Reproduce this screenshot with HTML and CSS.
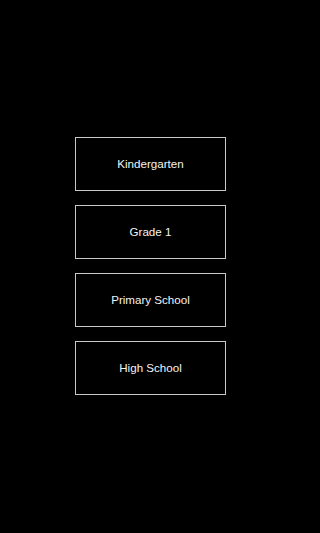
FILE: index.html
```html
<!DOCTYPE html>
<html>
<head>
<meta charset="utf-8">
<link rel="stylesheet" href="styles.css">
</head>
<body>
<main class="menu">
  <button class="option">Kindergarten</button>
  <button class="option">Grade 1</button>
  <button class="option">Primary School</button>
  <button class="option">High School</button>
</main>
</body>
</html>
```
FILE: styles.css
```css
html, body {
  margin: 0;
  padding: 0;
  background: #000;
  height: 100%;
}
.menu {
  width: 300px;
  display: flex;
  flex-direction: column;
  align-items: center;
  gap: 14px;
  padding-top: 137px;
  padding-left: 1px;
  box-sizing: border-box;
}
.option {
  box-sizing: border-box;
  width: 151px;
  height: 54px;
  background: #000;
  border: 1px solid #c8c8c8;
  border-radius: 0;
  color: #f4f4f4;
  font-family: "Liberation Sans", Arial, sans-serif;
  font-size: 11.6px;
  padding: 0 0 2px 0;
  margin: 0;
}
```
